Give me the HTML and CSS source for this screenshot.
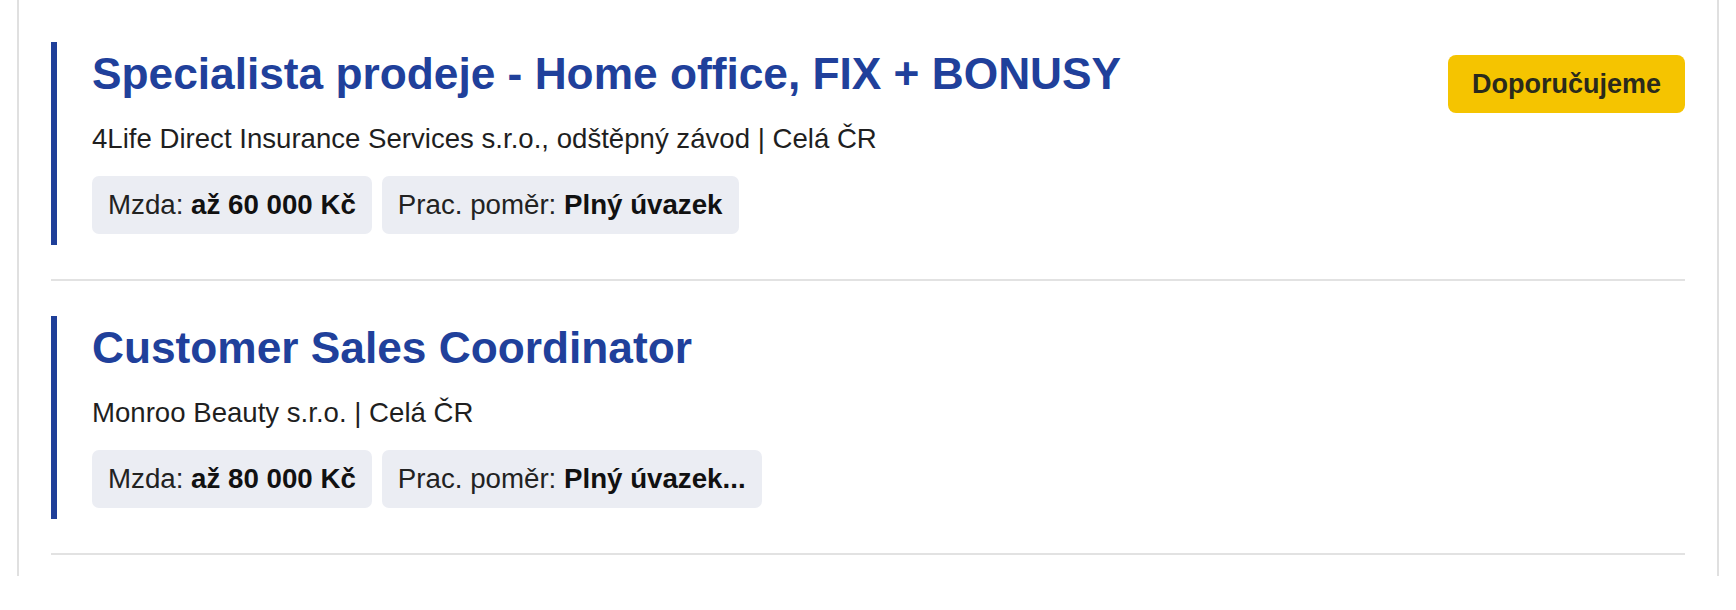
FILE: index.html
```html
<!DOCTYPE html>
<html lang="cs">
<head>
<meta charset="utf-8">
<title>Nabídky práce</title>
<link rel="stylesheet" href="styles.css">
</head>
<body>
<div class="list">
  <article class="job">
    <div class="job-body">
      <div class="job-head">
        <h2 class="job-title">Specialista prodeje - Home office, FIX + BONUSY</h2>
        <span class="badge">Doporučujeme</span>
      </div>
      <p class="job-company">4Life Direct Insurance Services s.r.o., odštěpný závod | Celá ČR</p>
      <div class="tags">
        <span class="tag">Mzda: <b>až 60 000 Kč</b></span>
        <span class="tag">Prac. poměr: <b>Plný úvazek</b></span>
      </div>
    </div>
  </article>
  <article class="job">
    <div class="job-body">
      <div class="job-head">
        <h2 class="job-title">Customer Sales Coordinator</h2>
      </div>
      <p class="job-company">Monroo Beauty s.r.o. | Celá ČR</p>
      <div class="tags">
        <span class="tag">Mzda: <b>až 80 000 Kč</b></span>
        <span class="tag">Prac. poměr: <b>Plný úvazek...</b></span>
      </div>
    </div>
  </article>
</div>
</body>
</html>
```
FILE: styles.css
```css
* { box-sizing: border-box; }

html, body {
  margin: 0;
  padding: 0;
  background: #ffffff;
}

body {
  font-family: "Liberation Sans", Arial, sans-serif;
  color: #1f1f1f;
}

.list {
  margin-left: 17px;
  width: 1702px;
  border-left: 2px solid #e0e0e0;
  border-right: 2px solid #e0e0e0;
  padding: 42px 32px 21px 32px;
}

.job {
  border-bottom: 2px solid #e2e2e2;
  padding-bottom: 34px;
  margin-bottom: 35px;
}

.job:last-child {
  margin-bottom: 0;
}

.job-body {
  border-left: 6px solid #1f3f99;
  padding-left: 35px;
  padding-bottom: 11px;
}

.job-head {
  display: flex;
  justify-content: space-between;
  align-items: flex-start;
  min-height: 71px;
}

.job-title {
  margin: 6px 0 0 0;
  font-size: 44.25px;
  line-height: 52px;
  font-weight: 700;
  color: #20409b;
}

.badge {
  margin-top: 13px;
  height: 58px;
  padding: 0 24px;
  line-height: 58px;
  background: #f5c400;
  color: #2a2a1c;
  font-size: 27px;
  font-weight: 700;
  border-radius: 8px;
}

.job-company {
  margin: 8px 0 0 0;
  font-size: 27.6px;
  line-height: 36px;
  color: #1f1f1f;
}

.tags {
  display: flex;
  gap: 10px;
  margin-top: 19px;
}

.tag {
  background: #ebedf3;
  border-radius: 7px;
  padding: 12px 16px;
  font-size: 27.7px;
  line-height: 34px;
  color: #222222;
}

.tag b {
  font-weight: 700;
  color: #111111;
}
```
